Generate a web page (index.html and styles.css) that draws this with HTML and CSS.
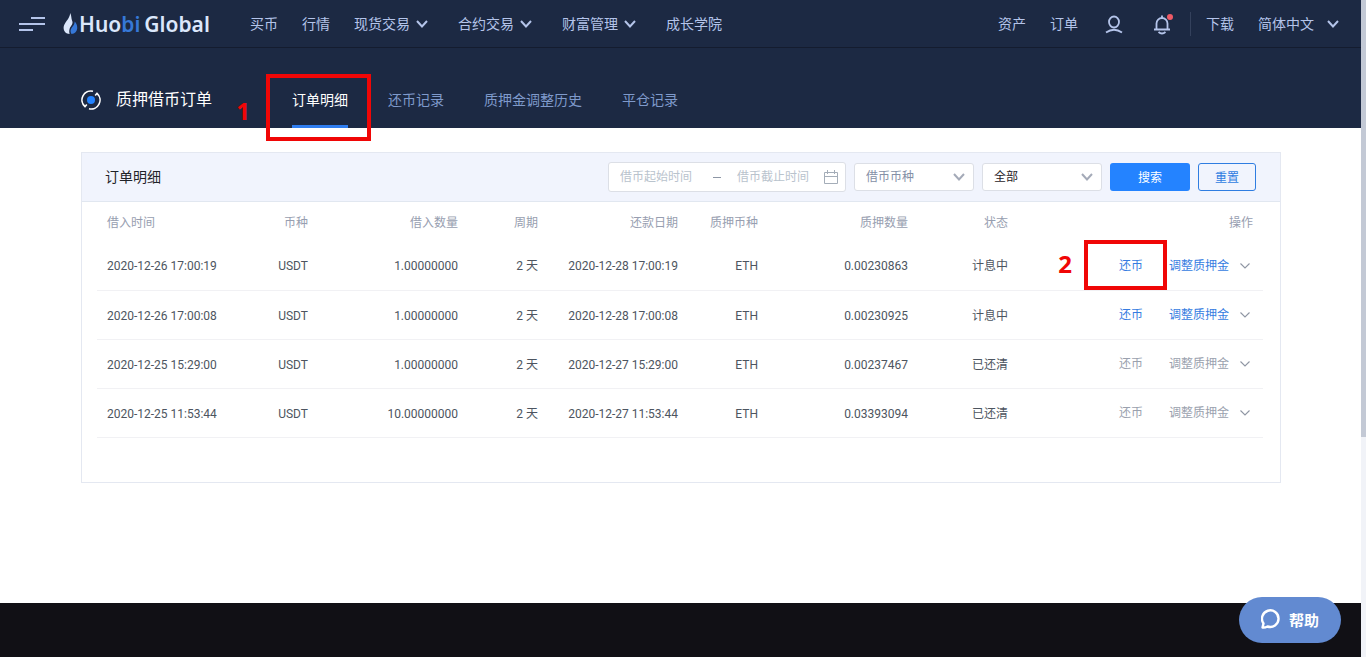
FILE: index.html
```html
<!DOCTYPE html>
<html lang="zh-CN">
<head>
<meta charset="utf-8">
<title>质押借币订单</title>
<link rel="stylesheet" href="styles.css">
</head>
<body>
<svg class="sprite" aria-hidden="true">
  <symbol id="chevron" viewBox="0 0 12 12"><path d="M1 3l5 5.500l5-5.500" fill="none" stroke="currentColor" stroke-width="2"/></symbol>
  <symbol id="chevron-thin" viewBox="0 0 12 12"><path d="M1.500 3.500l4.500 4.500l4.500-4.500" fill="none" stroke="currentColor" stroke-width="1.100"/></symbol>
</svg>
<div class="page">
  <header class="topbar">
    <button class="icon-button menu" type="button" aria-label="菜单">
      <svg width="26" height="16" viewBox="0 0 26 16"><path d="M12 2h14M0 8h26M0 14h14" stroke="currentColor" stroke-width="2"/></svg>
    </button>
    <a class="logo" href="#">
      <svg width="15" height="24" viewBox="0 0 15 24">
        <path fill="#dbe7fb" d="M7.200 1C8.800 4 8 6.500 9.200 9C10.500 12 7.600 14 6.700 16.500C6 18.600 6.200 20.500 6.600 22C3 22 .6 19.500 .6 15.800C.6 10.500 6.800 7.500 7.200 1z"/>
        <path fill="#3678d8" d="M11.700 9.500C13.500 11.500 14.500 14 14.200 16.500C13.900 19.500 12 21.800 8.500 22C7 19.500 7.300 17.500 9 15.300C10.500 13.500 11.600 12 11.700 9.500z"/>
      </svg>
      <span>Huo<span class="logo-accent">bi</span></span><span>Global</span>
    </a>
    <nav class="nav">
      <a href="#">买币</a>
      <a href="#">行情</a>
      <a href="#">现货交易<svg class="nav-arrow"><use href="#chevron"/></svg></a>
      <a href="#">合约交易<svg class="nav-arrow"><use href="#chevron"/></svg></a>
      <a href="#">财富管理<svg class="nav-arrow"><use href="#chevron"/></svg></a>
      <a href="#">成长学院</a>
    </nav>
    <div class="tools">
      <a href="#">资产</a>
      <a href="#">订单</a>
      <button class="icon-button" type="button" aria-label="账户">
        <svg width="24" height="24" viewBox="0 0 24 24" fill="none" stroke="currentColor" stroke-width="1.800"><ellipse cx="12" cy="10" rx="5" ry="5.500"/><path d="M4 20.500Q12 15 20 20.500"/></svg>
      </button>
      <button class="icon-button bell" type="button" aria-label="通知">
        <svg width="24" height="24" viewBox="0 0 24 24" fill="none" stroke="currentColor" stroke-width="1.800"><path d="M12 3.500v2M6.500 17.500v-6a5.500 5.500 0 0 1 11 0v6M4 17.500h16M8.500 20q3.500 3 7 0"/></svg>
        <span class="dot"></span>
      </button>
      <div class="divider"></div>
      <a href="#">下载</a>
      <a href="#">简体中文<svg class="lang-arrow"><use href="#chevron"/></svg></a>
    </div>
  </header>

  <div class="subbar">
    <h1 class="heading">
      <svg width="20" height="20" viewBox="0 0 20 20" fill="none" stroke="#fff" stroke-width="1.600"><circle cx="10" cy="10" r="4" fill="#2483ff" stroke="none"/><path d="M12 1.200A9 9 0 0 0 4 16.700l1.800-2.200M8 18.800A9 9 0 0 0 16 3.300l-1.800 2.200"/></svg>
      质押借币订单
    </h1>
    <nav class="tabs">
      <a class="tab active" href="#">订单明细<span class="mark mark-tab"><span class="mark-number">1</span></span></a>
      <a class="tab" href="#">还币记录</a>
      <a class="tab" href="#">质押金调整历史</a>
      <a class="tab" href="#">平仓记录</a>
    </nav>
  </div>

  <main class="main">
    <section class="card">
      <div class="card-head">
        <h2 class="card-title">订单明细</h2>
        <form class="filters">
          <div class="range">
            <input type="text" placeholder="借币起始时间" aria-label="借币起始时间">
            <span class="range-dash"></span>
            <input type="text" placeholder="借币截止时间" aria-label="借币截止时间">
            <svg width="14" height="14" viewBox="0 0 14 14" fill="none" stroke="currentColor"><path d="M.5 2.500h13v11H.5zM.5 6.500h13M3.500 0v4M10.500 0v4"/></svg>
          </div>
          <div class="select">
            <select class="muted" aria-label="借币币种"><option>借币币种</option></select>
            <svg><use href="#chevron"/></svg>
          </div>
          <div class="select">
            <select aria-label="状态"><option>全部</option></select>
            <svg><use href="#chevron"/></svg>
          </div>
          <button class="button primary" type="button">搜索</button>
          <button class="button outline" type="reset">重置</button>
        </form>
      </div>
      <table class="orders">
        <colgroup><col class="c-time"><col class="c-coin"><col class="c-amount"><col class="c-term"><col class="c-due"><col class="c-term"><col class="c-amount"><col class="c-status"><col></colgroup>
        <thead>
          <tr><th>借入时间</th><th>币种</th><th>借入数量</th><th>周期</th><th>还款日期</th><th>质押币种</th><th>质押数量</th><th>状态</th><th>操作</th></tr>
        </thead>
        <tbody>
          <tr><td>2020-12-26 17:00:19</td><td>USDT</td><td>1.00000000</td><td>2 天</td><td>2020-12-28 17:00:19</td><td>ETH</td><td>0.00230863</td><td>计息中</td>
            <td><div class="actions"><a href="#">还币<span class="mark mark-repay"><span class="mark-number">2</span></span></a><a href="#">调整质押金</a><svg><use href="#chevron-thin"/></svg></div></td></tr>
          <tr><td>2020-12-26 17:00:08</td><td>USDT</td><td>1.00000000</td><td>2 天</td><td>2020-12-28 17:00:08</td><td>ETH</td><td>0.00230925</td><td>计息中</td>
            <td><div class="actions"><a href="#">还币</a><a href="#">调整质押金</a><svg><use href="#chevron-thin"/></svg></div></td></tr>
          <tr><td>2020-12-25 15:29:00</td><td>USDT</td><td>1.00000000</td><td>2 天</td><td>2020-12-27 15:29:00</td><td>ETH</td><td>0.00237467</td><td>已还清</td>
            <td><div class="actions done"><a>还币</a><a>调整质押金</a><svg><use href="#chevron-thin"/></svg></div></td></tr>
          <tr><td>2020-12-25 11:53:44</td><td>USDT</td><td>10.00000000</td><td>2 天</td><td>2020-12-27 11:53:44</td><td>ETH</td><td>0.03393094</td><td>已还清</td>
            <td><div class="actions done"><a>还币</a><a>调整质押金</a><svg><use href="#chevron-thin"/></svg></div></td></tr>
        </tbody>
      </table>
    </section>
  </main>
  <footer class="footer"></footer>
</div>
<div class="scrollbar"><div class="thumb"></div></div>
<button class="help" type="button">
  <svg width="20" height="20" viewBox="0 0 20 20" fill="none" stroke="#fff" stroke-width="2.400" stroke-linejoin="round"><path d="M1.500 18.500L2.500 14.500A8.300 8.300 0 1 1 6.500 17.500Q4 18.800 1.500 18.500z"/></svg>
  帮助
</button>
</body>
</html>
```
FILE: styles.css
```css
* { box-sizing: border-box; }

body {
  margin: 0;
  display: flex;
  min-height: 100vh;
  background: #fff;
  font-family: Roboto, "Noto Sans CJK SC", sans-serif;
  font-size: 14px;
  color: #1f2328;
}

a { color: inherit; text-decoration: none; }
button, input, select { font: inherit; }
h1, h2 { margin: 0; font-weight: 400; }
.sprite { position: absolute; width: 0; height: 0; }

.page { flex: 1; min-width: 0; display: flex; flex-direction: column; }

.topbar {
  height: 48px;
  display: flex;
  align-items: center;
  padding: 0 21px 0 19px;
  background: #1c2943;
  border-bottom: 1px solid #141c2f;
  color: #b4c4ea;
  white-space: nowrap;
}
.icon-button {
  display: flex;
  padding: 0;
  border: 0;
  background: none;
  color: inherit;
}
.logo {
  display: flex;
  align-items: center;
  gap: 4px;
  width: 147px;
  margin-left: 18px;
  font: 600 21px/24px "Noto Sans", sans-serif;
  color: #dbe7fb;
}
.logo svg { margin-right: -3px; }
.logo-accent { color: #3678d8; }
.nav { display: flex; gap: 24px; margin-left: 40px; }
.nav a, .tools a { display: flex; align-items: center; line-height: 18px; }
.nav-arrow { width: 14px; height: 12px; margin: 0 5px; }
.tools { display: flex; align-items: center; gap: 24px; margin-left: auto; }
.bell { position: relative; }
.dot {
  position: absolute;
  top: 2px;
  right: 1px;
  width: 6px;
  height: 6px;
  border-radius: 50%;
  background: #ef5a66;
}
.divider { width: 1px; height: 24px; margin: 0 -9px 0 -8px; background: #34415c; }
.lang-arrow { width: 14px; height: 12px; margin-left: 12px; }

.subbar {
  height: 80px;
  display: flex;
  gap: 80px;
  padding: 0 80px 0 81px;
  background: #1c2943;
  white-space: nowrap;
}
.heading {
  display: flex;
  align-items: center;
  gap: 15px;
  padding-top: 24px;
  font-size: 16px;
  line-height: 20px;
  color: #fff;
}
.tabs { display: flex; gap: 40px; }
.tab {
  position: relative;
  display: flex;
  align-items: center;
  padding-top: 22px;
  color: #7f9acb;
}
.tab.active { color: #fff; box-shadow: inset 0 -3px #2f7df0; }

.mark { position: absolute; z-index: 1; border: 4px solid #f00606; }
.mark-tab { top: 26px; left: -26px; width: 105px; height: 67px; }
.mark-repay { top: -17px; left: -35px; width: 83px; height: 50px; }
.mark-number {
  position: absolute;
  top: 4px;
  right: 100%;
  margin-right: 16px;
  font: 700 24px/32px "Noto Sans", sans-serif;
  color: #f00606;
}
.mark-tab .mark-number { top: 17px; margin-right: 20px; }

.main { flex: 1; padding: 24px 80px 24px 81px; }
.card { border: 1px solid #e4e8f1; padding-bottom: 44px; }
.card-head {
  display: flex;
  align-items: center;
  justify-content: space-between;
  height: 49px;
  padding: 0 24px 0 23px;
  background: #f1f4fd;
  border-bottom: 1px solid #e1e7f0;
}
.card-title { font-size: 14px; line-height: 20px; }
.filters { display: flex; align-items: center; gap: 8px; font-size: 12px; }
.range {
  display: flex;
  align-items: center;
  width: 238px;
  height: 30px;
  padding: 0 7px 0 11px;
  border: 1px solid #dcdfe6;
  border-radius: 3px;
  background: #fff;
  color: #a4adb8;
}
.range input {
  width: 76px;
  min-width: 0;
  flex: 1;
  padding: 0;
  border: 0;
  background: none;
  outline: 0;
}
.range input::placeholder { color: #b9c3cd; opacity: 1; }
.range-dash { width: 8px; height: 1px; margin: 0 16px 0 6px; background: #8d96a5; }
.select { position: relative; width: 120px; height: 28px; }
.select select {
  width: 100%;
  height: 100%;
  padding: 0 28px 0 11px;
  border: 1px solid #dcdfe6;
  border-radius: 3px;
  background: #fff;
  color: #1f2328;
  appearance: none;
}
.select .muted { color: #8590a6; }
.select svg {
  position: absolute;
  top: 8px;
  right: 9px;
  width: 12px;
  height: 12px;
  color: #a4aab8;
  pointer-events: none;
}
.button { width: 80px; height: 28px; padding: 0 0 2px; border-radius: 3px; font-size: 12px; }
.primary { border: 0; background: #2483ff; color: #fff; }
.outline { width: 58px; border: 1px solid #2f7de1; background: transparent; color: #2f7de1; }

.orders {
  width: calc(100% - 32px);
  margin: 0 17px 0 15px;
  table-layout: fixed;
  border-collapse: collapse;
  font-size: 12px;
  line-height: 18px;
  color: #4d5560;
  white-space: nowrap;
}
.c-time { width: 131px; }
.c-coin { width: 90px; }
.c-amount { width: 150px; }
.c-term { width: 80px; }
.c-due { width: 140px; }
.c-status { width: 100px; }
.orders th, .orders td { padding: 2px 10px 0; text-align: right; }
.orders th:first-child, .orders td:first-child { text-align: left; }
.orders th { height: 39px; font-weight: 400; color: #979eb0; }
.orders td { height: 49px; border-bottom: 1px solid #f1f1f4; }
.actions {
  display: flex;
  align-items: center;
  justify-content: flex-end;
  padding-bottom: 1px;
  color: #357ce1;
}
.actions a { position: relative; margin-right: 26px; }
.actions a + a { margin-right: 10px; }
.actions svg { width: 12px; height: 12px; margin-right: 2px; color: #8f96a3; }
.actions.done { color: #9aa1ae; }

.footer { height: 54px; background: #111015; }

.scrollbar { width: 5px; background: #f1f3f8; }
.thumb { height: 437px; background: #c3c9d5; }

.help {
  position: fixed;
  right: 25px;
  bottom: 14px;
  display: flex;
  align-items: center;
  justify-content: center;
  gap: 8px;
  height: 46px;
  padding: 0 22px 2px;
  border: 0;
  border-radius: 23px;
  background: #628ad1;
  color: #fff;
  font-size: 15px;
  font-weight: 700;
}
```
